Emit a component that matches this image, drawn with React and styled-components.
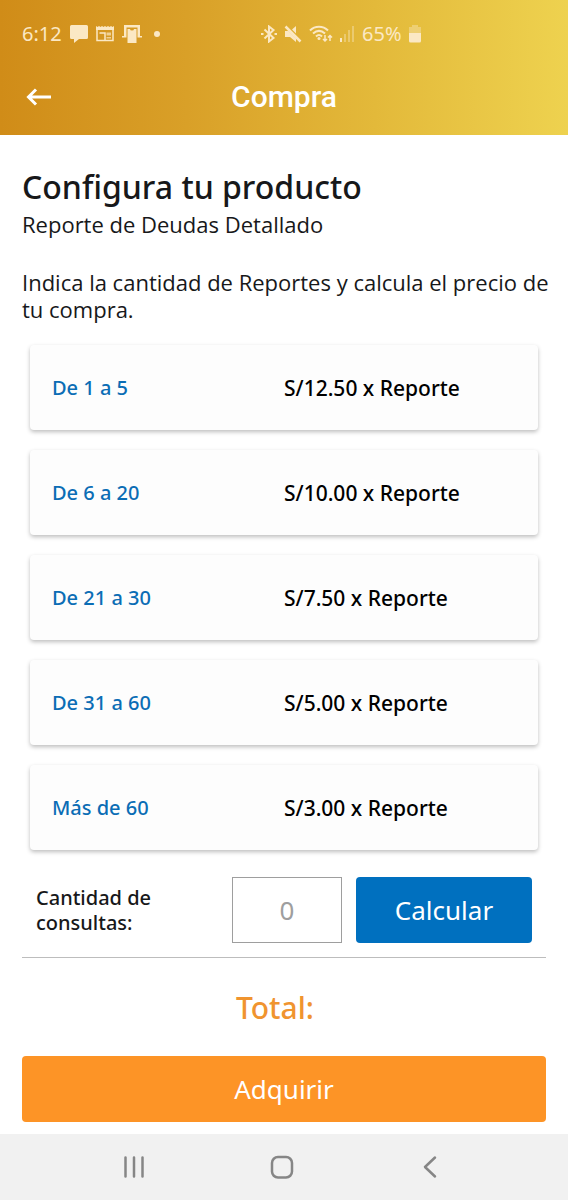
import { useState } from "react";
import styled, { createGlobalStyle } from "styled-components";

const tiers = [
    { range: "De 1 a 5", price: "S/12.50 x Reporte" },
    { range: "De 6 a 20", price: "S/10.00 x Reporte" },
    { range: "De 21 a 30", price: "S/7.50 x Reporte" },
    { range: "De 31 a 60", price: "S/5.00 x Reporte" },
    { range: "Más de 60", price: "S/3.00 x Reporte" },
];

const StatusBar = () => (
    <Status>
        <StatusGroup>
            <span>6:12</span>
            <svg width="18" height="18" viewBox="0 0 18 18" fill="currentColor">
                <path d="M1.5 0h15A1.5 1.5 0 0 1 18 1.5v11a1.5 1.5 0 0 1-1.5 1.5H9L4 18v-4H1.5A1.5 1.5 0 0 1 0 12.5v-11A1.5 1.5 0 0 1 1.5 0z" />
            </svg>
            <svg width="18" height="18" viewBox="0 0 18 18" fill="currentColor">
                <path d="M0 1l1.5 1L3 1l1.5 1L6 1l1.5 1L9 1l1.5 1L12 1l1.5 1L15 1l1.5 1L18 1v4H0z" />
                <path d="M1 5v10.500h16V5M3.5 8h5.500v7.500" fill="none" stroke="currentColor" strokeWidth="1.5" />
                <path d="M10.500 7.500H15v3h-4.500zM10.500 12H15v1.500h-4.500z" opacity=".7" />
            </svg>
            <svg width="20" height="20" viewBox="0 0 20 20" fill="currentColor">
                <path d="M2 1h16v11h2v1.5h-4.500V3.500h-11v10H0V12h2z" />
                <path d="M5.500 5h2.500a2 1.500 0 0 0 4 0h2.500v14h-9z" />
            </svg>
            <Dot />
        </StatusGroup>
        <StatusGroup $tight>
            <svg width="16" height="18" viewBox="0 0 16 18" fill="none" stroke="currentColor" strokeWidth="2">
                <path d="M3.500 4.500l9 8.500L8 16.500v-15l4.500 3.500-9 8.500" />
                <path d="M0 9h2.500M13.500 9H16" />
            </svg>
            <svg width="18" height="18" viewBox="0 0 18 18" fill="currentColor">
                <path d="M1 6h3.500l7.500 7.500V17l-6-5H1zM8 4.500L12 1v7.500z" />
                <path d="M1.500 1.500l15 15" stroke="currentColor" strokeWidth="2.5" />
            </svg>
            <svg width="24" height="18" viewBox="0 0 24 18" fill="none" stroke="currentColor" strokeWidth="2">
                <path d="M1 5.500c5-5 13-5 18 0M4 8.500c4-3.500 8-3.500 12 0M7 11.500c2-2 4-2 6 0" />
                <circle cx="10" cy="13.500" r="1.5" fill="currentColor" stroke="none" />
                <path d="M16 10v6M14 14l2 2 2-2M21 16v-5M19 12.500l2-2 2 2" strokeWidth="1.5" />
            </svg>
            <svg width="15" height="18" viewBox="0 0 15 18" fill="currentColor">
                <path d="M0 13h2v4H0z" />
                <path d="M4 9h2v8H4zM8 5h2v12H8zM12 1h2v16h-2z" opacity=".4" />
            </svg>
            <span>65%</span>
            <svg width="12" height="18" viewBox="0 0 12 18" fill="currentColor">
                <path d="M3 0h6v2h3v6H0V2h3z" opacity=".4" />
                <path d="M0 8h12v8a1.5 1.5 0 0 1-1.5 1.5h-9A1.5 1.5 0 0 1 0 16z" />
            </svg>
        </StatusGroup>
    </Status>
);

const App = () => {

    const [amount, setAmount] = useState("");

    return (
        <>
            <GlobalStyle />
            <Page>
                <Header>
                    <StatusBar />
                    <TitleBar>
                        <IconButton aria-label="Volver">
                            <svg width="26" height="18" viewBox="0 0 26 18" fill="none" stroke="currentColor" strokeWidth="3">
                                <path d="M25 9H3M10 1.500L2.500 9l7.500 7.500" />
                            </svg>
                        </IconButton>
                        <ScreenTitle>Compra</ScreenTitle>
                    </TitleBar>
                </Header>
                <Content>
                    <Heading>Configura tu producto</Heading>
                    <Subheading>Reporte de Deudas Detallado</Subheading>
                    <Intro>Indica la cantidad de Reportes y calcula el precio de tu compra.</Intro>
                    <Tiers>
                        {tiers.map(tier => (
                            <Tier key={tier.range}>
                                <Range>{tier.range}</Range>
                                <Price>{tier.price}</Price>
                            </Tier>
                        ))}
                    </Tiers>
                    <Form onSubmit={e => e.preventDefault()}>
                        <Label htmlFor="amount">Cantidad de consultas:</Label>
                        <Amount
                            id="amount"
                            inputMode="numeric"
                            placeholder="0"
                            value={amount}
                            onChange={e => setAmount(e.target.value)}
                        />
                        <Button type="submit">Calcular</Button>
                    </Form>
                    <Total>Total:</Total>
                    <BuyButton type="button">Adquirir</BuyButton>
                </Content>
                <NavBar>
                    <IconButton aria-label="Recientes">
                        <svg width="24" height="24" viewBox="0 0 24 24" fill="none" stroke="currentColor" strokeWidth="2.5" strokeLinecap="round">
                            <path d="M3.500 2.500v19M12 2.500v19M20.500 2.500v19" />
                        </svg>
                    </IconButton>
                    <IconButton aria-label="Inicio">
                        <svg width="24" height="24" viewBox="0 0 24 24" fill="none" stroke="currentColor" strokeWidth="2.5">
                            <rect x="2" y="2" width="20" height="20.5" rx="6" />
                        </svg>
                    </IconButton>
                    <IconButton aria-label="Atrás">
                        <svg width="24" height="24" viewBox="0 0 24 24" fill="none" stroke="currentColor" strokeWidth="2.5" strokeLinecap="round" strokeLinejoin="round">
                            <path d="M17 2.500L7 12l10 9.500" />
                        </svg>
                    </IconButton>
                </NavBar>
            </Page>
        </>
    );

};

export default App;

const GlobalStyle = createGlobalStyle`
*, *::before, *::after {
    box-sizing: border-box;
}
body {
    margin: 0;
    background-color: #fff;
    color: #17181a;
    font-family: "Noto Sans", "Open Sans", sans-serif;
}
button, input {
    font-family: inherit;
}
svg {
    display: block;
    flex: none;
}
`;

const Page = styled.div`
min-height: 100vh;
display: flex;
flex-direction: column;
`;

const Header = styled.header`
padding-top: 20px;
background: linear-gradient(90deg, #d08c18, #d9a028 33%, #e3b93a 66%, #eed24f);
color: #fff;
`;
const Status = styled.div`
display: grid;
grid-template-columns: 239px 1fr;
padding: 0 22px;
color: #fbe8c4;
font-size: 20px;
line-height: 28px;
`;
const StatusGroup = styled.div`
display: flex;
align-items: center;
gap: ${props => props.$tight ? '7px' : '8px'};
`;
const Dot = styled.span`
width: 6px;
height: 6px;
margin-left: 4px;
border-radius: 50%;
background-color: currentColor;
`;
const TitleBar = styled.div`
display: grid;
grid-template-columns: 34px 1fr 34px;
align-items: center;
height: 87px;
padding: 10px 22px 0;
`;
const ScreenTitle = styled.h1`
margin: 0;
font-family: Roboto, sans-serif;
font-size: 30px;
font-weight: 500;
text-align: center;
`;
const IconButton = styled.button`
display: flex;
align-items: center;
justify-content: center;
padding: 4px;
border: 0;
background: none;
color: inherit;
cursor: pointer;
`;

const Content = styled.main`
flex: 1;
display: flex;
flex-direction: column;
padding: 32px 22px 12px;
`;
const Heading = styled.h2`
margin: 0;
font-size: 32px;
font-weight: 500;
line-height: 40px;
`;
const Subheading = styled.p`
margin: 0;
font-family: "Open Sans", sans-serif;
font-size: 22px;
line-height: 34px;
`;
const Intro = styled.p`
margin: 28px -8px 0 0;
font-family: "Open Sans", sans-serif;
font-size: 22px;
line-height: 27px;
`;
const Tiers = styled.ul`
display: grid;
gap: 20px;
margin: 22px 0 0;
padding: 0 8px;
list-style: none;
`;
const Tier = styled.li`
display: grid;
grid-template-columns: 1fr 1fr;
align-items: center;
height: 85px;
padding: 0 22px;
border-radius: 4px;
background-color: #fdfdfd;
box-shadow: 0 2px 4px rgba(0, 0, 0, 0.26);
font-size: 20px;
font-weight: 500;
`;
const Range = styled.span`
color: #0b6db5;
`;
const Price = styled.span`
color: #000;
font-size: 21px;
`;

const Form = styled.form`
display: grid;
grid-template-columns: 1fr 110px 176px;
column-gap: 14px;
align-items: center;
margin-top: 27px;
padding: 0 14px 14px;
border-bottom: 1px solid #bdbdbd;
`;
const Label = styled.label`
width: 140px;
font-size: 20px;
font-weight: 500;
line-height: 25px;
`;
const Amount = styled.input`
width: 100%;
height: 66px;
padding: 0;
border: 1px solid #9e9e9e;
border-radius: 0;
background-color: #fff;
color: #17181a;
font-size: 26px;
text-align: center;

&::placeholder {
    color: #9e9e9e;
}
`;
const Button = styled.button`
height: 66px;
border: 0;
border-radius: 4px;
background-color: #0070bf;
color: #fff;
font-size: 26px;
cursor: pointer;
`;
const BuyButton = styled(Button)`
background-color: #fd9426;
`;
const Total = styled.p`
margin: 29px 0 27px;
padding-right: 18px;
color: #f0942f;
font-size: 30px;
font-weight: 500;
line-height: 42px;
text-align: center;
`;

const NavBar = styled.nav`
display: flex;
align-items: center;
justify-content: space-between;
height: 66px;
padding: 0 122px 0 118px;
background-color: #f1f1f1;
color: #868686;
`;
